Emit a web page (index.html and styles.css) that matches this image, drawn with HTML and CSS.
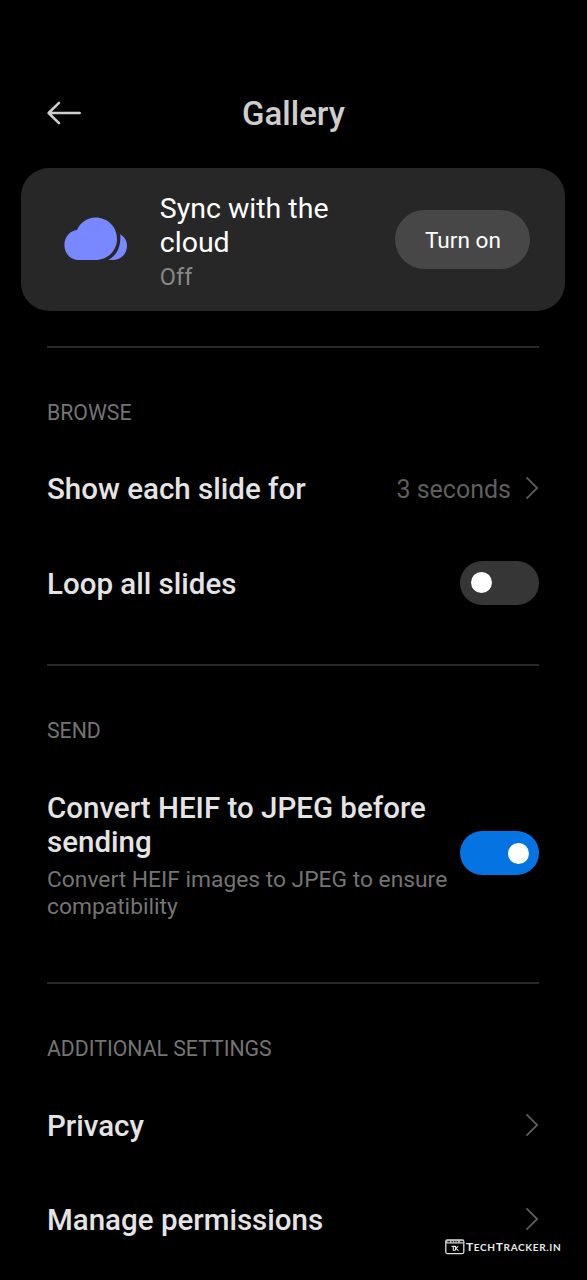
FILE: index.html
```html
<!DOCTYPE html>
<html lang="en">
<head>
<meta charset="utf-8">
<title>Gallery</title>
<link rel="stylesheet" href="styles.css">
</head>
<body>
<header class="topbar">
  <svg class="back" width="36" height="26" viewBox="0 0 36 26"><path d="M13 2.8 2.600 13 13 23.2M2.600 13H33.700" fill="none" stroke="#cecece" stroke-width="2.500" stroke-linecap="round" stroke-linejoin="round"/></svg>
  <h1 class="title">Gallery</h1>
</header>
<section class="card">
  <svg class="cloud" width="64" height="44" viewBox="0 0 64 44">
    <path d="M56.2 17.2C60.5 19.7 63 23.8 63 28.7C63 36.8 57 43 48.5 43H44.5C52.5 38.5 57.3 29.5 56.2 17.2Z" fill="#7988ff"/>
    <path d="M14.5 43C6.500 43 .4 36.300 .4 28.2C.4 20 6.200 13.500 13 13.100C16.400 5.500 23.200.6 31.500.6C43.600.6 53 10 53 22C53 34 43.500 43 31.500 43Z" fill="#7988ff"/>
  </svg>
  <div class="card-text">
    <div class="card-title">Sync with the cloud</div>
    <div class="card-state">Off</div>
  </div>
  <button class="turn-on">Turn on</button>
</section>
<main class="settings">
  <section class="group">
    <h2 class="label">BROWSE</h2>
    <div class="row">
      <span class="name">Show each slide for</span>
      <span class="value">3 seconds</span>
      <svg class="chevron" width="14" height="24" viewBox="0 0 14 24"><path d="M1.500 1.300 12.200 12 1.500 22.700" fill="none" stroke="#5c5c5c" stroke-width="1.800"/></svg>
    </div>
    <div class="row">
      <span class="name">Loop all slides</span>
      <span class="toggle"><span class="knob"></span></span>
    </div>
  </section>
  <section class="group">
    <h2 class="label">SEND</h2>
    <div class="row tall">
      <div class="copy">
        <div class="name">Convert HEIF to JPEG before sending</div>
        <div class="desc">Convert HEIF images to JPEG to ensure compatibility</div>
      </div>
      <span class="toggle on"><span class="knob"></span></span>
    </div>
  </section>
  <section class="group">
    <h2 class="label">ADDITIONAL SETTINGS</h2>
    <div class="row">
      <span class="name">Privacy</span>
      <svg class="chevron" width="14" height="24" viewBox="0 0 14 24"><path d="M1.500 1.300 12.200 12 1.500 22.700" fill="none" stroke="#5c5c5c" stroke-width="1.800"/></svg>
    </div>
    <div class="row">
      <span class="name">Manage permissions</span>
      <svg class="chevron" width="14" height="24" viewBox="0 0 14 24"><path d="M1.500 1.300 12.200 12 1.500 22.700" fill="none" stroke="#5c5c5c" stroke-width="1.800"/></svg>
    </div>
  </section>
</main>
<div class="brand">
  <svg width="20" height="16" viewBox="0 0 20 16">
    <rect x=".8" y=".8" width="18" height="13.800" rx="1.500" fill="none" stroke="#dedede" stroke-width="1.300"/>
    <path d="M1 1H19V4.600H1Z" fill="#bcbcbc"/>
    <path d="M2.500 2.600H5M6.500 2.600H8M9 2.600H10.500M11.500 2.600H13M15 2.600H18" stroke="#222" stroke-width="1.200"/>
    <path d="M6.500 7.400H10.500M8.300 7.400V11.300H10M10.500 7V11.500M13.200 7.300 10.800 9.300 13.500 11.600" fill="none" stroke="#e8e8e8" stroke-width="1.100"/>
  </svg>
  <span class="brand-name">T<small>ECH</small>T<small>RACKER.IN</small></span>
</div>
</body>
</html>
```
FILE: styles.css
```css
* { box-sizing: border-box; }
body {
  margin: 0;
  height: 1280px;
  overflow: hidden;
  position: relative;
  background: #000;
  font-family: Roboto, sans-serif;
}
.topbar {
  display: grid;
  grid-template-columns: 36px 1fr 36px;
  align-items: center;
  height: 168px;
  padding: 60px 46px 0 46px;
}
.back { margin-bottom: 2px; }
.title {
  margin: 0;
  text-align: center;
  font-size: 33px;
  line-height: 40px;
  font-weight: 500;
  color: #cecece;
}
.card {
  display: flex;
  align-items: center;
  width: 544px;
  height: 143px;
  margin-left: 21.400px;
  padding: 0 35px 0 43px;
  border-radius: 28px;
  background: #272727;
}
.cloud { margin: 0 0 2px -.400px; }
.card-text { width: 200px; margin-left: 31.800px; padding-top: 4px; }
.card-title { font-size: 28.500px; line-height: 33.300px; color: #fff; }
.card-state { font-size: 23.500px; line-height: 28px; margin-top: 4px; color: #878787; }
.turn-on {
  width: 135px;
  height: 59px;
  margin-left: auto;
  padding: 2px 0 0;
  border: 0;
  border-radius: 30px;
  background: #474747;
  color: #fff;
  font: 400 22.600px Roboto, sans-serif;
}
.settings { padding: 35px 48px 0 47px; }
.group {
  height: 318.200px;
  border-top: 2px solid #292929;
}
.label {
  margin: 0;
  height: 94px;
  padding-top: 51px;
  font-size: 21.250px;
  line-height: 28px;
  font-weight: 400;
  color: #747474;
}
.row { display: flex; align-items: center; height: 94.600px; }
.tall { height: 188px; }
.name { font-size: 29.500px; line-height: 34px; font-weight: 500; color: #e4e4e4; }
.copy { width: 405px; padding-top: 3px; }
.desc { margin-top: 7px; font-size: 22.800px; line-height: 27px; color: #747474; }
.value { margin-left: auto; font-size: 25px; color: #5f5f5f; }
.chevron { margin: 0 0 2px auto; }
.value + .chevron { margin-left: 14px; }
.toggle {
  flex: none;
  display: flex;
  align-items: center;
  width: 79px;
  height: 44px;
  margin: 0 0 2px auto;
  padding: 0 10.500px;
  border-radius: 22px;
  background: #363636;
}
.on { justify-content: flex-end; background: #0573e1; }
.knob { width: 21px; height: 21px; border-radius: 50%; background: #fff; }
.brand {
  position: absolute;
  left: 445px;
  top: 1238px;
  display: flex;
  align-items: center;
  gap: 1px;
}
.brand-name {
  padding-top: 1px;
  font: 700 12px/16px Lato, sans-serif;
  letter-spacing: .650px;
  color: #e8e8e8;
}
.brand-name small { font-size: 10px; }
```
